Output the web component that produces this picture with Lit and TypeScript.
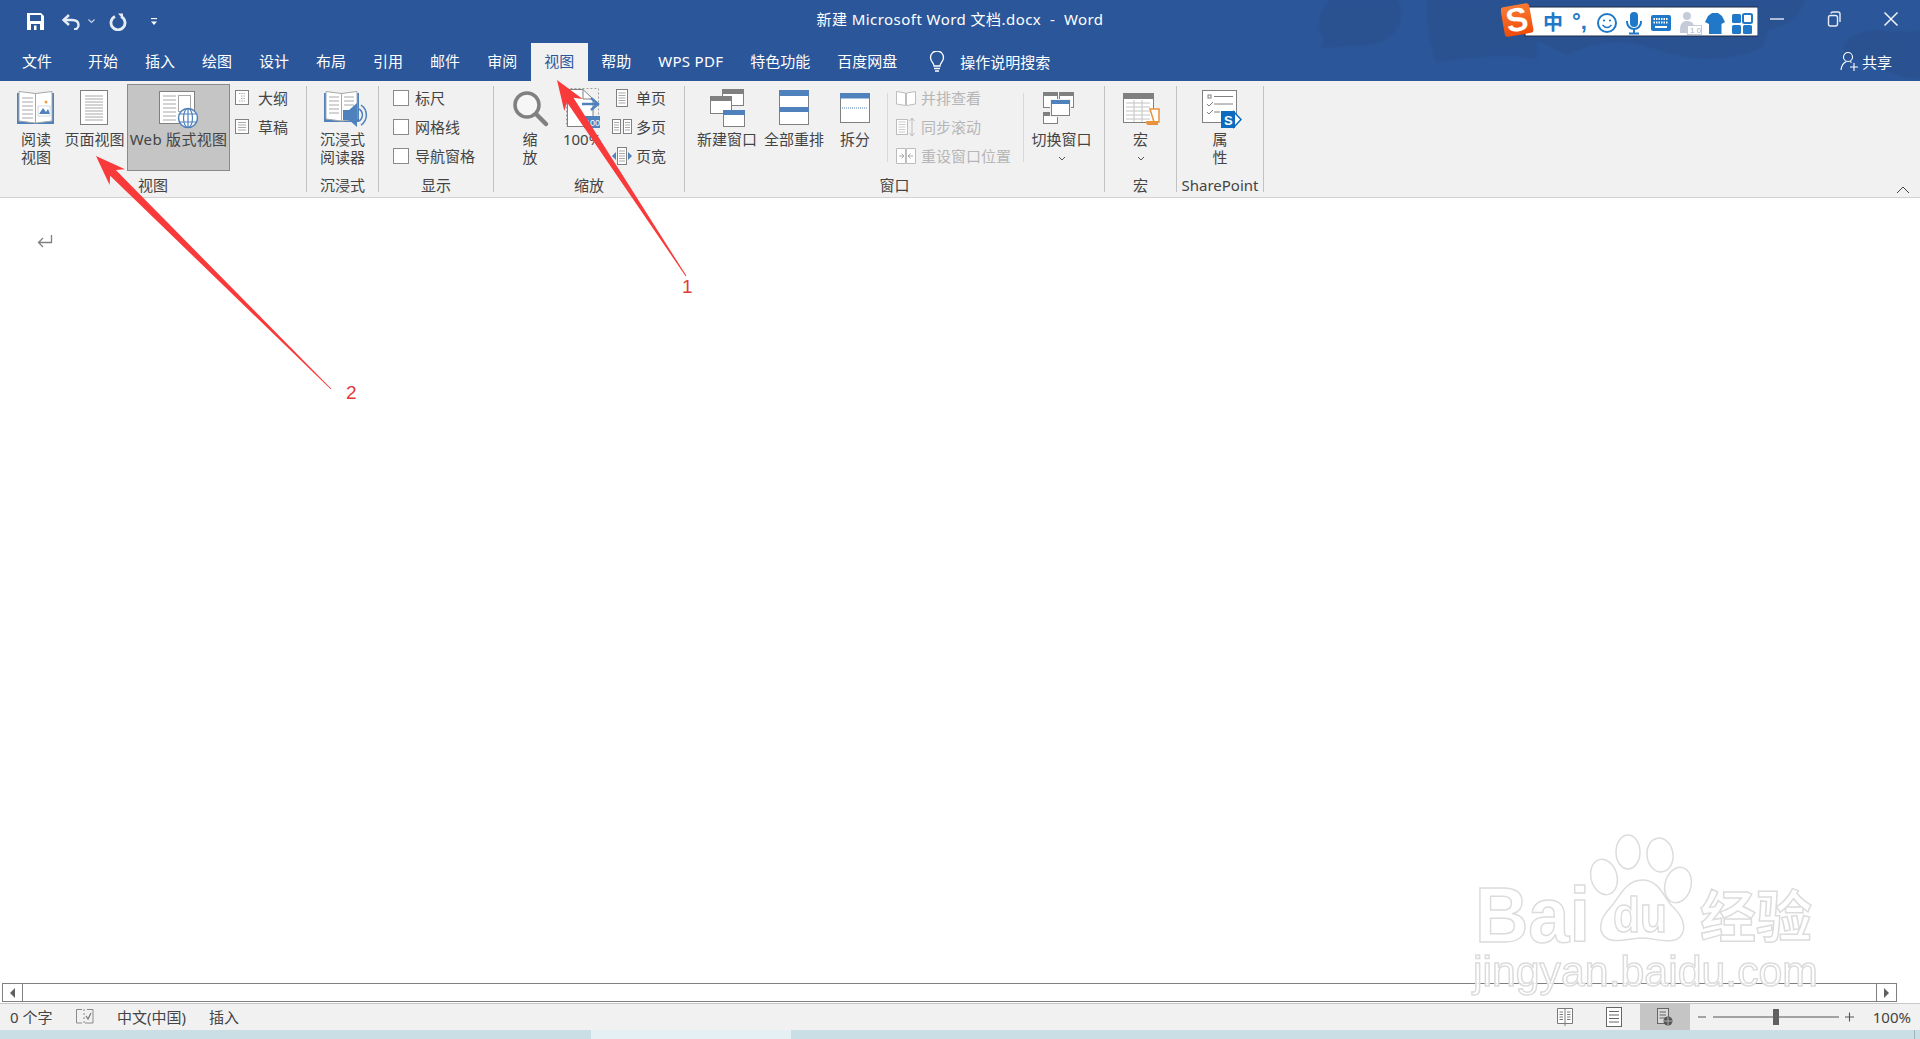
import { LitElement, html, css } from "lit";
import { customElement } from "lit/decorators.js";

const G = "#808080";
const B = "#4f81bd";
const L = "#a8a8a8";

const lines = (x1: number, x2: number, ys: number[]) =>
  ys.map((y) => `M${x1} ${y}H${x2}`).join("");

const tabs = ["开始", "插入", "绘图", "设计", "布局", "引用", "邮件", "审阅", "视图", "帮助", "WPS PDF", "特色功能", "百度网盘"];

const chevron = html`<svg class="chev" width="10" height="18" viewBox="0 0 10 18"><path d="M2 9l3 3 3-3" fill="none" stroke="#555" stroke-width="1"/></svg>`;

@customElement("app-root")
export class AppRoot extends LitElement {
  static styles = css`
    :host {
      display: flex;
      flex-direction: column;
      position: relative;
      width: 1920px;
      height: 1039px;
      overflow: hidden;
      background: #fff;
      font-family: "Noto Sans", "Noto Sans CJK SC", sans-serif;
      font-size: 15px;
      color: #444;
    }
    svg { display: block; flex: none; }
    .title { position: relative; height: 81px; background: #2b579a; color: #fff; flex: none; overflow: hidden; }
    .blobs { position: absolute; left: 0; top: 0; }
    .row1 { position: relative; display: grid; grid-template-columns: 1fr auto 1fr; height: 43px; align-items: center; }
    .qat { display: flex; align-items: center; padding-left: 27px; height: 38px; }
    .qat .undo { margin-left: 18px; }
    .qat .undod { margin-left: 8px; }
    .qat .redo { margin-left: 14px; }
    .qat .more { margin-left: 23px; }
    .doc-name { font-size: 15px; letter-spacing: .45px; line-height: 38px; height: 38px; margin-top: -5px; white-space: pre; }
    .winbtns { display: flex; justify-content: flex-end; gap: 41px; padding-right: 21px; margin-top: -5px; }
    .row2 { position: relative; display: flex; height: 38px; padding-left: 8.5px; }
    .tab { padding: 0 13.5px; line-height: 36px; white-space: nowrap; }
    .tab.first { margin-right: 9px; }
    .tab.on { background: #f1f1f1; color: #2b579a; }
    .tab.latin { letter-spacing: .3px; }
    .tell { display: flex; align-items: center; gap: 15px; padding-left: 18.5px; line-height: 36px; }
    .share { margin-left: auto; display: flex; align-items: center; gap: 3px; padding-right: 28px; height: 36px; }

    .ribbon { display: flex; padding-top: 3px; box-sizing: border-box; background: #f1f1f1; border-bottom: 1px solid #d2d2d2; flex: none; height: 117px; }
    .group { display: flex; flex-direction: column; height: 112px; }
    .body { display: flex; height: 91px; }
    .label { text-align: center; line-height: 20px; height: 20px; white-space: nowrap; }
    .sep { width: 1px; height: 106px; margin-top: 2px; background: #c2c2c2; flex: none; }
    .sep.in { height: 69px; margin-top: 9px; background: #d8d8d8; }
    .big { display: flex; flex-direction: column; align-items: center; line-height: 18px; text-align: center; white-space: nowrap; flex: none; }
    .big.web { background: #c5c5c5; border: 1px solid #8a8a8a; box-sizing: border-box; height: 87px; letter-spacing: .3px; }
    .web svg { margin: -1px -1px 0 -1px; }
    .col { display: flex; flex-direction: column; flex: none; margin-top: -1px; }
    .item { display: flex; align-items: center; height: 29px; white-space: nowrap; }
    .off { color: #b6b6b6; }
    .box { width: 14px; height: 14px; border: 1px solid #8a8a8a; background: #fff; margin-right: 6px; }
    .mid { padding-left: 14px; }
    .g1 { width: 306px; } .g2 { width: 71px; } .g3 { width: 114px; } .g4 { width: 190px; }
    .g5 { width: 419px; } .g6 { width: 71px; } .g7 { width: 86px; }
    .collapse { margin: 102px 0 0 632px; }

    .doc { flex: 1; padding: 37px 0 0 37px; }
    .scroll { display: flex; height: 20px; margin: 0 23px 0 2px; box-sizing: border-box; flex: none; }
    .sb { width: 20px; height: 19px; box-sizing: border-box; border: 1px solid #808080; display: flex; align-items: center; justify-content: center; }
    .sb.l { border-right: 0; }
    .sb.r { border-left: 0; }
    .track { flex: 1; height: 19px; box-sizing: border-box; border: 1px solid #808080; }
    .status { display: flex; align-items: center; height: 26px; background: #f1f1f1; border-top: 1px solid #c8c8c8; font-size: 15px; flex: none; line-height: 26px; }
    .status .wc { margin-left: 10px; min-width: 66px; }
    .status .lang { margin-left: 23px; }
    .status .ins { margin-left: 23px; }
    .st-right { margin-left: auto; display: flex; align-items: center; height: 26px; }
    .v1 { margin-right: 33px; }
    .vweb { width: 50px; height: 26px; background: #c5c5c5; display: flex; align-items: center; justify-content: center; margin: 0 7px 0 18px; }
    .zoomv { margin-left: 17px; width: 40px; padding-right: 9px; text-align: right; white-space: nowrap; }
    .strip { height: 9px; display: flex; background: #c9dfe5; overflow: hidden; flex: none; }
    .seg0 { width: 591px; }
    .seg1 { width: 200px; background: #e4f0f3; }
    .seg2 { flex: 1; padding: 7px 0 0 999px; font-size: 13px; line-height: 16px; color: #222; }
    .seg3 { width: 5px; border-left: 1px solid #9fb4ba; }

    .sogou { position: absolute; left: 1501px; top: 3px; }
    .over { position: absolute; left: 0; top: 0; pointer-events: none; }
  `;

  render() {
    return html`
      <div class="title">
        <svg class="blobs" width="1920" height="81" viewBox="0 0 1920 81">
          <defs><filter id="bl"><feGaussianBlur stdDeviation="1.200"/></filter></defs>
          <g fill="#2c5190" filter="url(#bl)">
            <path d="M1330 0C1316 14 1316 30 1324 40L1319 48C1335 48 1345 46 1360 46C1385 46 1402 30 1402 12L1398 0Z"/>
            <path d="M1427 0C1426 20 1430 45 1436 62C1470 58 1510 52 1537 60L1537 40L1567 55C1590 44 1610 40 1636 44C1660 50 1680 58 1702 59C1730 58 1755 55 1764 44L1768 30C1790 26 1800 14 1806 0Z"/>
            <path d="M1862 32C1845 38 1840 48 1846 56L1870 64C1890 72 1905 78 1920 80V30C1900 34 1880 28 1862 32Z"/>
          </g>
        </svg>
        <div class="row1">
          <div class="qat">
            <svg width="17" height="17" viewBox="0 0 17 17"><path d="M0 0H14L17 3V17H0Z" fill="#fff"/><rect x="3" y="2" width="11" height="6" fill="#2b579a"/><rect x="4" y="11" width="9" height="6" fill="#2b579a"/><rect x="7" y="12.500" width="2.500" height="4.500" fill="#fff"/></svg>
            <svg class="undo" width="18" height="16" viewBox="0 0 18 16"><path d="M7 1L1.500 6 7 11" fill="none" stroke="#e6ecf5" stroke-width="2.400"/><path d="M2 6H10C14 6 16.500 8 16.500 11S14 15.500 12 15.500" fill="none" stroke="#e6ecf5" stroke-width="2.400"/></svg>
            <svg class="undod" width="7" height="5" viewBox="0 0 7 5"><path d="M.5 .5L3.500 3.500 6.500 .5" fill="none" stroke="#c6d2e6" stroke-width="1.200"/></svg>
            <svg class="redo" width="18" height="18" viewBox="0 0 18 18"><path d="M6 3.500A7 7 0 1 0 12 3.500" fill="none" stroke="#e6ecf5" stroke-width="2.800"/><path d="M9 .5L14 .5 14 6Z" fill="#e6ecf5"/></svg>
            <svg class="more" width="8" height="8" viewBox="0 0 8 8"><path d="M1 .5H7" stroke="#fff" stroke-width="1.300"/><path d="M1 3.500H7L4 7Z" fill="#fff"/></svg>
          </div>
          <div class="doc-name">新建 Microsoft Word 文档.docx  -  Word</div>
          <div class="winbtns">
            <svg width="16" height="16" viewBox="0 0 16 16"><path d="M1 8H15" stroke="#e8edf5" stroke-width="1.400"/></svg>
            <svg width="16" height="16" viewBox="0 0 16 16"><rect x="2.500" y="4.500" width="9" height="10.500" rx="2" fill="none" stroke="#e8edf5" stroke-width="1.400"/><path d="M5 2.500C5 1.500 6 1 7 1H12C13.500 1 14 2 14 3V11" fill="none" stroke="#e8edf5" stroke-width="1.400"/></svg>
            <svg width="16" height="16" viewBox="0 0 16 16"><path d="M1.500 1.500L14.500 14.500M14.500 1.500L1.500 14.500" stroke="#f0f3f8" stroke-width="1.500"/></svg>
          </div>
        </div>
        <div class="row2">
          <div class="tab first">文件</div>
          ${tabs.map((t) => html`<div class="tab ${t === "视图" ? "on" : ""} ${t === "WPS PDF" ? "latin" : ""}">${t}</div>`)}
          <div class="tell">
            <svg width="16" height="22" viewBox="0 0 16 22"><path d="M5 15C5 12 1.500 10.500 1.500 6.500A6.500 6.500 0 0 1 14.500 6.500C14.500 10.500 11 12 11 15Z" fill="none" stroke="#fff" stroke-width="1.300"/><path d="M5 17.500H11M6 20H10" stroke="#fff" stroke-width="1.500"/></svg>
            <span>操作说明搜索</span>
          </div>
          <div class="share">
            <svg width="19" height="20" viewBox="0 0 19 20"><circle cx="8" cy="6" r="4.500" fill="none" stroke="#fff" stroke-width="1.100"/><path d="M1 19C1.500 14 4 11.500 6.500 10.500" fill="none" stroke="#fff" stroke-width="1.100"/><path d="M10 10.500L11.500 11.500M14 12V20M10 16H18" stroke="#fff" stroke-width="1.100" fill="none"/></svg>
            <span>共享</span>
          </div>
        </div>
      </div>

      <div class="ribbon">
        <section class="group g1">
          <div class="body" style="padding-left:10px">
            <div class="big" style="width:52px">
              <svg width="52" height="46" viewBox="0 0 52 46"><path d="M7 9H44V40H7Z" fill="${B}"/><path d="M9 7.500L25.500 9.500V39L9 37Z" fill="#fff" stroke="${L}"/><path d="M42 7.500L25.500 9.500V39L42 37Z" fill="#fff" stroke="${L}"/><path d="${lines(12, 23, [14, 18, 22, 26, 30, 34])}" stroke="${L}"/><path d="M29 30L33 24 36 28 38 25 40 30Z" fill="${B}"/><rect x="28" y="22" width="12" height="10" fill="none" stroke="#bcd" stroke-width=".7"/><circle cx="36" cy="18" r="1.500" fill="#e8a040"/></svg>
              <span>阅读</span><span>视图</span>
            </div>
            <div class="big" style="width:65px">
              <svg width="65" height="46" viewBox="0 0 65 46"><rect x="18.500" y="6.500" width="27" height="34" fill="#fff" stroke="${G}"/><path d="${lines(23, 41, [12, 15, 18, 21, 24, 27, 30, 33, 36])}" stroke="${L}"/></svg>
              <span>页面视图</span>
            </div>
            <div class="big web" style="width:103px">
              <svg width="103" height="46" viewBox="0 0 103 46"><rect x="32.500" y="7.500" width="35" height="32" fill="#fff" stroke="${G}"/><path d="${lines(36, 49, [12, 16, 20, 24, 28, 32, 36])}" stroke="${L}"/><rect x="51.500" y="11.500" width="12" height="16" fill="#fff" stroke="${L}"/><circle cx="61" cy="34" r="9.500" fill="#fff" stroke="${B}" stroke-width="1.500"/><ellipse cx="61" cy="34" rx="4.500" ry="9.500" fill="none" stroke="${B}" stroke-width="1.200"/><path d="M52 30H70M52 38H70M61 25V43" stroke="${B}" stroke-width="1.200"/></svg>
              <span>Web 版式视图</span>
            </div>
            <div class="col" style="margin-left:5px">
              <div class="item"><svg style="margin-right:9px" width="14" height="15" viewBox="0 0 14 15"><rect x=".5" y=".5" width="13" height="14" fill="#fff" stroke="${G}"/><path d="M4 3.500H10M6 6H10M6 8.500H10M4 11H10" stroke="${L}" stroke-dasharray="1 .6"/></svg>大纲</div>
              <div class="item"><svg style="margin-right:9px" width="14" height="15" viewBox="0 0 14 15"><rect x=".5" y=".5" width="13" height="14" fill="#fff" stroke="${G}"/><path d="M3 3.500H11M3 6H11M3 8.500H11M3 11H11" stroke="${L}"/></svg>草稿</div>
            </div>
          </div>
          <div class="label">视图</div>
        </section>
        <div class="sep"></div>

        <section class="group g2">
          <div class="body">
            <div class="big" style="width:71px">
              <svg width="71" height="46" viewBox="0 0 71 46"><path d="M17 9H52V38H17Z" fill="${B}"/><path d="M19 7.500L34.500 9.500V37L19 35Z" fill="#fff" stroke="${L}"/><path d="M50 7.500L34.500 9.500V37L50 35Z" fill="#fff" stroke="${L}"/><path d="${lines(22, 32, [13, 17, 21, 25, 29])}${lines(37, 47, [13, 17, 21])}" stroke="${L}"/><path d="M36 26H42L50 19V43L42 36H36Z" fill="${B}"/><path d="M52 25A7 7 0 0 1 52 37M54 21A12 12 0 0 1 54 41" fill="none" stroke="${B}" stroke-width="1.500"/></svg>
              <span>沉浸式</span><span>阅读器</span>
            </div>
          </div>
          <div class="label">沉浸式</div>
        </section>
        <div class="sep"></div>

        <section class="group g3">
          <div class="body mid">
            <div class="col">
              <div class="item"><i class="box"></i>标尺</div>
              <div class="item"><i class="box"></i>网格线</div>
              <div class="item"><i class="box"></i>导航窗格</div>
            </div>
          </div>
          <div class="label">显示</div>
        </section>
        <div class="sep"></div>

        <section class="group g4">
          <div class="body mid">
            <div class="big" style="width:44px">
              <svg width="44" height="46" viewBox="0 0 44 46"><circle cx="19" cy="21" r="12" fill="#f6f6f6" stroke="#808080" stroke-width="3.500"/><path d="M28 30L38 40" stroke="#808080" stroke-width="4.500" stroke-linecap="round"/></svg>
              <span>缩</span><span>放</span>
            </div>
            <div class="big" style="width:60px">
              <svg width="60" height="46" viewBox="0 0 60 46"><rect x="14.500" y="4.500" width="32" height="38" fill="none" stroke="#a0a0a0" stroke-dasharray="2 2"/><path d="M15.500 5.500H31L41 15V42.500H15.500Z" fill="#fff" stroke="${G}"/><path d="M31 5.500V15H41" fill="none" stroke="${G}"/><path d="M30 20H45M39 14L46 20 39 26" fill="none" stroke="${B}" stroke-width="2.500"/><rect x="32" y="32" width="16" height="12" fill="${B}"/><text x="33" y="42" font-size="9" fill="#fff" font-family="Liberation Sans">100</text></svg>
              <span>100%</span>
            </div>
            <div class="col">
              <div class="item"><span style="width:20px;margin-right:4px"><svg style="margin-left:4px" width="12" height="18" viewBox="0 0 12 18"><rect x=".5" y=".5" width="11" height="17" fill="#fff" stroke="${G}"/><path d="${lines(2.5, 9.5, [4, 6.5, 9, 11.5, 14])}" stroke="${L}"/></svg></span>单页</div>
              <div class="item"><span style="width:20px;margin-right:4px"><svg width="20" height="15" viewBox="0 0 20 15"><rect x=".5" y=".5" width="8" height="14" fill="#fff" stroke="${G}"/><rect x="11.500" y=".5" width="8" height="14" fill="#fff" stroke="${G}"/><path d="${lines(2, 7, [3.5, 6, 8.5, 11])}${lines(13, 18, [3.5, 6, 8.5, 11])}" stroke="${L}"/></svg></span>多页</div>
              <div class="item"><span style="width:20px;margin-right:4px"><svg width="20" height="18" viewBox="0 0 20 18"><rect x="5.500" y=".5" width="9" height="17" fill="#fff" stroke="${G}"/><path d="${lines(7, 13, [4, 6.5, 9, 11.5, 14])}" stroke="${L}"/><path d="M0 9L4 5V13ZM20 9L16 5V13Z" fill="${B}"/></svg></span>页宽</div>
            </div>
          </div>
          <div class="label">缩放</div>
        </section>
        <div class="sep"></div>

        <section class="group g5">
          <div class="body" style="padding-left:8px">
            <div class="big" style="width:68px">
              <svg width="68" height="46" viewBox="0 0 68 46"><rect x="29.500" y="5.500" width="21" height="16" fill="#fff" stroke="${G}"/><rect x="29" y="5" width="22" height="5" fill="${G}"/><rect x="17.500" y="12.500" width="21" height="17" fill="#fff" stroke="${G}"/><rect x="17" y="12" width="22" height="5" fill="${G}"/><rect x="30.500" y="26.500" width="21" height="16" fill="#fff" stroke="${G}"/><rect x="30" y="26" width="22" height="5" fill="${B}"/></svg>
              <span>新建窗口</span>
            </div>
            <div class="big" style="width:66px">
              <svg width="66" height="46" viewBox="0 0 66 46"><rect x="18.500" y="6.500" width="29" height="34" fill="#fff" stroke="${G}"/><rect x="18" y="6" width="30" height="6" fill="${B}"/><rect x="18" y="23" width="30" height="5" fill="${B}"/></svg>
              <span>全部重排</span>
            </div>
            <div class="big" style="width:56px">
              <svg width="56" height="46" viewBox="0 0 56 46"><rect x="13.500" y="9.500" width="29" height="29" fill="#fff" stroke="${G}"/><rect x="13" y="9" width="30" height="5.500" fill="${B}"/><path d="M15 24H41" stroke="${B}" stroke-dasharray="1 1"/></svg>
              <span>拆分</span>
            </div>
            <div class="sep in" style="margin-left:4px"></div>
            <div class="col off" style="width:135px;padding-left:8px;box-sizing:border-box">
              <div class="item"><svg style="margin-right:5px" width="20" height="16" viewBox="0 0 20 16"><path d="M.5 1.500L9.500 3V15.500L.5 14ZM19.500 1.500L10.500 3V15.500L19.500 14Z" fill="#fff" stroke="#bdbdbd"/></svg>并排查看</div>
              <div class="item"><svg style="margin-right:5px" width="20" height="20" viewBox="0 0 20 20"><rect x=".5" y="2.500" width="11" height="15" fill="#fff" stroke="#bdbdbd"/><path d="${lines(2.5, 9.5, [5, 7.5, 10, 12.5, 15])}" stroke="#ccc"/><path d="M16 1V19M13.500 4L16 1 18.500 4M13.500 16L16 19 18.500 16" fill="none" stroke="#bdbdbd"/></svg>同步滚动</div>
              <div class="item"><svg style="margin-right:5px" width="20" height="16" viewBox="0 0 20 16"><path d="M.5 .5H9.500V15.500H.5ZM10.500 .5H19.500V15.500H10.500Z" fill="#fff" stroke="#bdbdbd"/><path d="M3 8H8M5.500 5.500L8 8 5.500 10.500M17 8H12M14.500 5.500L12 8 14.500 10.500" fill="none" stroke="#aaa"/></svg>重设窗口位置</div>
            </div>
            <div class="sep in"></div>
            <div class="big" style="width:75px">
              <svg width="75" height="46" viewBox="0 0 75 46"><rect x="19.500" y="8.500" width="14" height="15" fill="#fff" stroke="${G}"/><rect x="19" y="8" width="15" height="4" fill="${G}"/><rect x="35.500" y="8.500" width="14" height="15" fill="#fff" stroke="${G}"/><rect x="35" y="8" width="15" height="4" fill="${G}"/><rect x="19.500" y="28.500" width="14" height="11" fill="#fff" stroke="${G}"/><rect x="19" y="28" width="15" height="4" fill="${G}"/><rect x="26" y="15" width="21" height="18" fill="#f1f1f1"/><rect x="27.500" y="16.500" width="18" height="15" fill="#fff" stroke="${G}"/><rect x="27" y="16" width="19" height="4" fill="${B}"/></svg>
              <span>切换窗口</span>${chevron}
            </div>
          </div>
          <div class="label">窗口</div>
        </section>
        <div class="sep"></div>

        <section class="group g6">
          <div class="body">
            <div class="big" style="width:71px">
              <svg width="71" height="46" viewBox="0 0 71 46"><rect x="18.500" y="9.500" width="30" height="29" fill="#fff" stroke="${G}"/><rect x="18" y="9" width="31" height="6" fill="${G}"/><path d="${lines(21, 45, [19, 23, 27, 31, 35])}M29 16V38M37 16V38" stroke="#c4c4c4"/><path d="M45 25H54V38H49Z" fill="#fff" stroke="#e8923c" stroke-width="1.500"/><path d="M41 37H53V41H43Q41 41 41 37Z" fill="#e8923c"/></svg>
              <span>宏</span>${chevron}
            </div>
          </div>
          <div class="label">宏</div>
        </section>
        <div class="sep"></div>

        <section class="group g7">
          <div class="body">
            <div class="big" style="width:86px">
              <svg width="86" height="46" viewBox="0 0 86 46"><rect x="25.500" y="6.500" width="34" height="32" fill="#fff" stroke="${G}"/><rect x="31" y="11" width="3" height="3" fill="none" stroke="${G}"/><path d="M37 12.500H56M37 20H56" stroke="${G}"/><path d="M30 20L32 22 36 18M30 28L32 30 36 26" fill="none" stroke="${G}"/><path d="M37 28H43" stroke="${G}"/><path d="M57 28L64 35.500 57 43Z" fill="#fff" stroke="#0b6bc0" stroke-width="1.500"/><rect x="44" y="27" width="14" height="17" fill="#0b6bc0"/><text x="47" y="40.500" font-size="13" font-weight="700" fill="#fff" font-family="Liberation Sans">S</text></svg>
              <span>属</span><span>性</span>
            </div>
          </div>
          <div class="label">SharePoint</div>
        </section>
        <div class="sep"></div>
        <svg class="collapse" width="14" height="8" viewBox="0 0 14 8"><path d="M1 7L7 1 13 7" fill="none" stroke="#444" stroke-width="1"/></svg>
      </div>

      <div class="doc">
        <svg width="16" height="13" viewBox="0 0 16 13"><path d="M14.500 0V7.500H2M6 3L1.500 7.500 6 12" fill="none" stroke="#808080" stroke-width="1.300"/></svg>
      </div>

      <div class="scroll">
        <div class="sb l"><svg width="5" height="10" viewBox="0 0 5 10"><path d="M5 0V10L0 5Z" fill="#606060"/></svg></div>
        <div class="track"></div>
        <div class="sb r"><svg width="5" height="10" viewBox="0 0 5 10"><path d="M0 0V10L5 5Z" fill="#606060"/></svg></div>
      </div>

      <div class="status">
        <span class="wc">0 个字</span>
        <svg width="18" height="18" viewBox="0 0 18 18"><path d="M.5 1.500H6M.5 1.500V15H6M9 15H17V1.500H11" fill="none" stroke="#8a8a8a"/><path d="M8 1V17" stroke="#8a8a8a" stroke-dasharray="2 2"/><path d="M10 8L12 11 15 5" fill="none" stroke="#777" stroke-width="1.200"/></svg>
        <span class="lang">中文(中国)</span>
        <span class="ins">插入</span>
        <div class="st-right">
          <svg class="v1" width="16" height="18" viewBox="0 0 16 18"><path d="M.5 .5H15.500V15.500H.5ZM8 .5V18" fill="#fff" stroke="#7a7a7a"/><path d="${lines(2.5, 6, [4, 6.5, 9, 11.5])}${lines(10, 13.5, [4, 6.5, 9, 11.5])}" stroke="#7a7a7a"/></svg>
          <svg width="16" height="20" viewBox="0 0 16 20"><rect x=".5" y=".5" width="15" height="19" fill="#fff" stroke="#666"/><path d="${lines(3, 13, [4.5, 8, 11.5, 15])}" stroke="#666"/></svg>
          <div class="vweb"><svg width="16" height="18" viewBox="0 0 16 18"><rect x=".5" y=".5" width="11" height="15" fill="#d8d8d8" stroke="#666"/><path d="${lines(2.5, 9, [4, 7, 10])}" stroke="#666"/><circle cx="11" cy="13" r="4.500" fill="#555"/><path d="M7 13H15M11 9V17" stroke="#c5c5c5" stroke-width=".8"/></svg></div>
          <svg width="157" height="16" viewBox="0 0 157 16"><path d="M1 8H9M16 8H142M148 8H157M152.500 3.500V12.500" stroke="#555" stroke-width="1.100"/><rect x="76" y="0" width="6" height="16" fill="#606060"/></svg>
          <span class="zoomv">100%</span>
        </div>
      </div>

      <div class="strip">
        <div class="seg0"></div>
        <div class="seg1"></div>
        <div class="seg2">11:07</div>
        <div class="seg3"></div>
      </div>

      <svg class="sogou" width="257" height="36" viewBox="0 0 257 36">
        <defs><linearGradient id="sg" x1="0" y1="0" x2="0" y2="1"><stop offset="0" stop-color="#f97a33"/><stop offset="1" stop-color="#f04c08"/></linearGradient></defs>
        <rect x="24" y="4" width="233" height="29" fill="#fff" stroke="#1c2a44"/>
        <g transform="rotate(-10 16 17)">
          <rect x="1.500" y="2" width="29" height="30" rx="3" fill="url(#sg)"/>
          <text x="16" y="28" text-anchor="middle" font-size="33" font-weight="700" fill="#fff" font-family="Liberation Sans">S</text>
        </g>
        <g fill="#1f78c8" stroke="none">
          <text x="42" y="27" font-size="20" font-weight="700" font-family="Noto Sans CJK SC">中</text>
          <text x="71" y="26" font-size="22" font-weight="700" font-family="Liberation Sans">°,</text>
          <circle cx="106" cy="20" r="9" fill="none" stroke="#1f78c8" stroke-width="2"/>
          <circle cx="103" cy="17.500" r="1.100"/><circle cx="109" cy="17.500" r="1.100"/>
          <path d="M101.500 22Q106 27 110.500 22" fill="none" stroke="#1f78c8" stroke-width="1.500"/>
          <rect x="129" y="9" width="8" height="15" rx="4"/>
          <path d="M126 18V19A7 7 0 0 0 140 19V18" fill="none" stroke="#1f78c8" stroke-width="2"/>
          <path d="M133 26V30M128 30.500H138" stroke="#1f78c8" stroke-width="2"/>
          <rect x="150" y="12" width="20" height="16" rx="2"/>
          <path d="M152.500 16H167.500M152.500 19.500H167.500" stroke="#fff" stroke-width="2" stroke-dasharray="1.500 1"/>
          <path d="M154 24H166" stroke="#fff" stroke-width="2"/>
          <path d="M207 13L211 10H217L221 13 224 19 220.500 21V31H208V21L204 19Z"/>
          <rect x="231" y="11" width="9" height="9" rx="1.500"/>
          <rect x="242" y="11" width="9" height="9" rx="1.500" fill="none" stroke="#1f78c8" stroke-width="2"/>
          <rect x="231" y="22" width="9" height="9" rx="1.500"/>
          <rect x="242" y="22" width="9" height="9" rx="1.500"/>
        </g>
        <g fill="#c5cbd8">
          <circle cx="186" cy="13" r="4"/>
          <path d="M179 27C179 20 182 18 186 18S193 20 193 24V30H179Z"/>
          <rect x="186.500" y="22.500" width="14" height="9" fill="#fff" stroke="#c5cbd8"/>
          <text x="189" y="30" font-size="8" font-family="Liberation Sans" fill="#aab2c2">1 0</text>
        </g>
      </svg>

      <svg class="over" width="1920" height="1039" viewBox="0 0 1920 1039">
        <defs><filter id="soft"><feGaussianBlur stdDeviation=".5"/></filter></defs>
        <g filter="url(#soft)" fill="#fff" stroke="#dcdcdc" stroke-width="1.500">
          <text x="1475" y="942" font-size="78" font-weight="700" font-family="Liberation Sans" textLength="115" lengthAdjust="spacingAndGlyphs">Bai</text>
          <ellipse cx="1628" cy="852" rx="12" ry="17"/>
          <ellipse cx="1660" cy="855" rx="13" ry="17" transform="rotate(-8 1660 855)"/>
          <ellipse cx="1604" cy="877" rx="13" ry="18" transform="rotate(-15 1604 877)"/>
          <ellipse cx="1678" cy="885" rx="13" ry="18" transform="rotate(15 1678 885)"/>
          <path d="M1642 880C1625 880 1618 900 1610 908C1600 918 1598 930 1604 936C1612 945 1630 938 1642 938C1654 938 1672 945 1680 937C1688 928 1682 915 1672 906C1664 898 1660 880 1642 880Z"/>
          <text x="1613" y="932" font-size="50" font-weight="700" font-family="Liberation Sans" textLength="54" lengthAdjust="spacingAndGlyphs">du</text>
          <text x="1700" y="937" font-size="56" font-weight="700" font-family="Noto Sans CJK SC" textLength="112" lengthAdjust="spacingAndGlyphs">经验</text>
          <text x="1473" y="986" font-size="43" font-family="Liberation Sans" textLength="345" lengthAdjust="spacingAndGlyphs" fill-opacity=".85">jingyan.baidu.com</text>
        </g>
        <g fill="#f93a3a">
          <polygon points="557,80 582.700,99 573.500,97.800 686.400,275.800 685.600,276.200 566.900,102.200 564.300,111"/>
          <polygon points="96,156 125,169.300 115.800,170 331.300,388.700 330.700,389.300 110.200,175.700 109.600,184.900"/>
        </g>
        <g fill="#e23b3b" font-size="19" font-family="Liberation Sans">
          <text x="682" y="293">1</text>
          <text x="346" y="399">2</text>
        </g>
      </svg>
    `;
  }
}
